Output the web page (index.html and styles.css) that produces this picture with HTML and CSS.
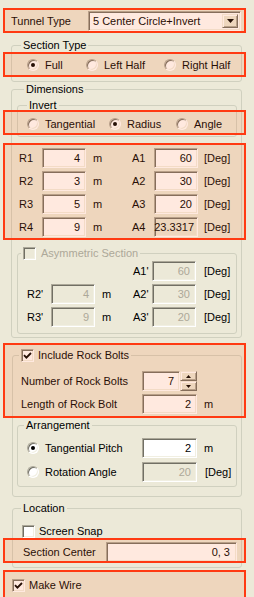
FILE: index.html
```html
<!DOCTYPE html>
<html>
<head>
<meta charset="utf-8">
<link rel="stylesheet" href="styles.css">
</head>
<body>
<div class="row top">
  <span class="top-label">Tunnel Type</span>
  <div class="combo sunken">
    <span class="combo-text">5 Center Circle+Invert</span>
    <span class="combo-btn raised"><svg width="7" height="4" viewBox="0 0 7 4"><path d="M0 0h7L3.5 4z" fill="#000"/></svg></span>
  </div>
</div>

<fieldset class="group g-section">
  <legend class="lg-section">Section Type</legend>
  <div class="row radios r-section">
    <span class="ritem w59"><span class="radio on"></span>Full</span>
    <span class="ritem w78"><span class="radio"></span>Left Half</span>
    <span class="ritem"><span class="radio"></span>Right Half</span>
  </div>
</fieldset>

<fieldset class="group g-dim">
  <legend class="lg-dim">Dimensions</legend>
  <div class="dim-inner">
    <fieldset class="group g-invert">
      <legend class="lg-invert">Invert</legend>
      <div class="row radios r-invert">
        <span class="ritem w82"><span class="radio"></span>Tangential</span>
        <span class="ritem w67"><span class="radio on"></span>Radius</span>
        <span class="ritem"><span class="radio"></span>Angle</span>
      </div>
    </fieldset>

    <div class="grid">
      <div class="row drow"><span class="c-rl">R1</span><span class="inp sunken">4</span><span class="c-unit">m</span><span class="c-al">A1</span><span class="inp sunken">60</span><span class="c-deg">[Deg]</span></div>
      <div class="row drow"><span class="c-rl">R2</span><span class="inp sunken">3</span><span class="c-unit">m</span><span class="c-al">A2</span><span class="inp sunken">30</span><span class="c-deg">[Deg]</span></div>
      <div class="row drow"><span class="c-rl">R3</span><span class="inp sunken">5</span><span class="c-unit">m</span><span class="c-al">A3</span><span class="inp sunken">20</span><span class="c-deg">[Deg]</span></div>
      <div class="row drow"><span class="c-rl">R4</span><span class="inp sunken">9</span><span class="c-unit">m</span><span class="c-al">A4</span><span class="inp sunken ro">23.3317</span><span class="c-deg">[Deg]</span></div>
    </div>

    <fieldset class="group g-asym">
      <legend class="lg-asym"><span class="lgflex"><span class="check dis"></span><span class="dis-text">Asymmetric Section</span></span></legend>
      <div class="agrid">
        <div class="row drow"><span class="c-rl2"></span><span class="blank"></span><span class="c-unit2"></span><span class="c-al2">A1'</span><span class="inp sunken dis">60</span><span class="c-deg2">[Deg]</span></div>
        <div class="row drow"><span class="c-rl2">R2'</span><span class="inp sunken dis">4</span><span class="c-unit2">m</span><span class="c-al2">A2'</span><span class="inp sunken dis">30</span><span class="c-deg2">[Deg]</span></div>
        <div class="row drow"><span class="c-rl2">R3'</span><span class="inp sunken dis">9</span><span class="c-unit2">m</span><span class="c-al2">A3'</span><span class="inp sunken dis">20</span><span class="c-deg2">[Deg]</span></div>
      </div>
    </fieldset>
  </div>
</fieldset>

<fieldset class="group g-rock">
  <legend class="lg-rock"><span class="lgflex"><span class="check"><svg width="9" height="9" viewBox="0 0 9 9"><path d="M1 4.2 L3.4 6.6 L8 2" fill="none" stroke="#000" stroke-width="1.9"/></svg></span><span>Include Rock Bolts</span></span></legend>
  <div class="rock-inner">
    <div class="row rrow r-num">
      <span class="c-rock">Number of Rock Bolts</span>
      <span class="inp sunken inp-num">7</span>
      <span class="spin">
        <span class="spin-btn raised"><svg width="5" height="3" viewBox="0 0 5 3"><path d="M0 3h5L2.5 0z" fill="#000"/></svg></span>
        <span class="spin-btn raised"><svg width="5" height="3" viewBox="0 0 5 3"><path d="M0 0h5L2.5 3z" fill="#000"/></svg></span>
      </span>
    </div>
    <div class="row rrow r-len">
      <span class="c-rock">Length of Rock Bolt</span>
      <span class="inp sunken inp-wide">2</span>
      <span class="c-unit3">m</span>
    </div>

    <fieldset class="group g-arr">
      <legend class="lg-arr">Arrangement</legend>
      <div class="row arow a1">
        <span class="ritem w115"><span class="radio on"></span>Tangential Pitch</span>
        <span class="inp sunken inp-wide white">2</span>
        <span class="c-unit3">m</span>
      </div>
      <div class="row arow a2">
        <span class="ritem w115"><span class="radio"></span>Rotation Angle</span>
        <span class="inp sunken inp-wide dis">20</span>
        <span class="c-unit4">[Deg]</span>
      </div>
    </fieldset>
  </div>
</fieldset>

<fieldset class="group g-loc">
  <legend class="lg-loc">Location</legend>
  <div class="loc-inner">
    <div class="row snap"><span class="check"></span><span class="cklabel">Screen Snap</span></div>
    <div class="row center-row">
      <span class="c-center">Section Center</span>
      <span class="inp sunken inp-center">0, 3</span>
    </div>
  </div>
</fieldset>

<div class="row wire">
  <span class="check"><svg width="9" height="9" viewBox="0 0 9 9"><path d="M1 4.2 L3.4 6.6 L8 2" fill="none" stroke="#000" stroke-width="1.9"/></svg></span><span class="cklabel">Make Wire</span>
</div>

<div class="hl hl1"></div>
<div class="hl hl2"></div>
<div class="hl hl3"></div>
<div class="hl hl4"></div>
<div class="hl hl5"></div>
<div class="hl hl6"></div>
<div class="hl hl7"></div>
</body>
</html>
```

FILE: styles.css
```css
* { box-sizing: border-box; }
html, body { margin: 0; padding: 0; }
body {
  width: 254px;
  height: 597px;
  overflow: hidden;
  position: relative;
  background: #ece9d8;
  color: #000;
  font-family: "Liberation Sans", Arial, sans-serif;
  font-size: 11px;
  line-height: 13px;
}

.row { display: flex; align-items: center; }

/* 3D edges */
.sunken {
  border: 1px solid;
  border-color: #aca899 #ffffff #ffffff #aca899;
  box-shadow: inset 1px 1px 0 #716f64, inset -1px -1px 0 #f1efe2;
  background: #fff;
}
.raised {
  border: 1px solid;
  border-color: #f1efe2 #716f64 #716f64 #f1efe2;
  box-shadow: inset 1px 1px 0 #fff, inset -1px -1px 0 #aca899;
  background: #ece9d8;
}

/* top combo */
.top { height: 20px; margin-top: 11px; padding-left: 11px; }
.top-label { width: 77px; }
.combo { width: 153px; height: 20px; display: flex; align-items: stretch; padding: 2px; }
.combo-text { flex: 1; padding-left: 2px; display: flex; align-items: center; }
.combo-btn { width: 16px; display: flex; align-items: center; justify-content: center; }

/* group boxes */
.group {
  margin: 0;
  padding: 0;
  border: 1px solid #d0d0bf;
  border-radius: 3px;
  min-width: 0;
}
.group > legend { padding: 0 2px; height: 13px; line-height: 13px; }
.lgflex { display: flex; align-items: center; height: 13px; }

.g-section { margin: 8px 0 0 11px; width: 231px; padding-bottom: 6px; }
.lg-section { margin-left: 9px; }
.g-dim { margin: 1px 0 0 11px; width: 231px; }
.lg-dim { margin-left: 12px; }
.dim-inner { padding: 0 4px 3px 5px; }
.g-invert { margin-top: 3px; width: 220px; padding-bottom: 2px; }
.lg-invert { margin-left: 9px; }

/* radios */
.radios { height: 20px; }
.r-section { margin-top: 3px; padding-left: 15px; }
.r-invert { margin-top: 2px; padding-left: 9px; }
.ritem { display: flex; align-items: center; }
.w59 { width: 59px; }
.w78 { width: 78px; }
.w82 { width: 82px; }
.w67 { width: 67px; }
.w115 { width: 115px; }
.radio {
  width: 12px;
  height: 12px;
  margin-right: 6px;
  border-radius: 50%;
  border: 1px solid;
  border-color: #aca899 #ffffff #ffffff #aca899;
  box-shadow: inset 1px 1px 0 #716f64, inset -1px -1px 0 #f1efe2;
  background: #fff;
  display: flex;
  align-items: center;
  justify-content: center;
  flex: none;
}
.radio.on::after {
  content: "";
  width: 4px;
  height: 4px;
  border-radius: 50%;
  background: #000;
}

/* checkboxes */
.check {
  width: 13px;
  height: 13px;
  flex: none;
  border: 1px solid;
  border-color: #aca899 #ffffff #ffffff #aca899;
  box-shadow: inset 1px 1px 0 #716f64, inset -1px -1px 0 #f1efe2;
  background: #fff;
  display: flex;
  align-items: center;
  justify-content: center;
}
.check.dis { background: #ece9d8; }
.cklabel { margin-left: 4px; }
.dis-text { margin-left: 5px; color: #aca899; }
.lg-rock .lgflex span:last-child { margin-left: 4px; }

/* inputs */
.inp {
  width: 44px;
  height: 20px;
  flex: none;
  display: flex;
  align-items: center;
  justify-content: flex-end;
  padding-right: 5px;
}
.inp.ro { background: #ece9d8; padding-right: 3px; }
.inp.dis { background: #ece9d8; color: #aca899; }
.blank { width: 44px; flex: none; }

/* dimensions grid */
.grid { margin-top: 11px; display: flex; flex-direction: column; gap: 3px; }
.drow { height: 20px; }
.c-rl { width: 25px; padding-left: 2px; }
.c-unit { width: 46px; padding-left: 7px; }
.c-al { width: 22px; }
.c-deg { padding-left: 6px; }

.g-asym { margin-top: 10px; width: 220px; padding-bottom: 6px; }
.lg-asym { margin-left: 3px; }
.agrid { margin-top: 1px; display: flex; flex-direction: column; gap: 3px; }
.c-rl2 { width: 33px; padding-left: 9px; }
.c-unit2 { width: 38px; padding-left: 7px; }
.c-al2 { width: 19px; }
.c-deg2 { padding-left: 8px; }

/* rock bolts */
.g-rock { margin: 11px 0 0 12px; width: 230px; }
.lg-rock { margin-left: 6px; }
.rock-inner { padding: 0 0 9px 0; }
.rrow { height: 20px; padding-left: 8px; }
.r-num { margin-top: 9px; }
.r-len { margin-top: 3px; }
.c-rock { width: 121px; }
.inp-num { width: 38px; }
.inp-wide { width: 55px; }
.inp.white { background: #fff; }
.spin { width: 17px; height: 20px; display: flex; flex-direction: column; }
.spin-btn { height: 10px; display: flex; align-items: center; justify-content: center; }
.c-unit3 { padding-left: 7px; }
.c-unit4 { padding-left: 8px; }

.g-arr { margin: 5px 4px 0 4px; width: 220px; padding-bottom: 4px; }
.lg-arr { margin-left: 6px; }
.arow { height: 20px; padding-left: 9px; }
.a1 { margin-top: 6px; }
.a2 { margin-top: 4px; }

/* location */
.g-loc { margin: 5px 0 0 12px; width: 230px; }
.lg-loc { margin-left: 8px; }
.loc-inner { padding-bottom: 5px; }
.snap { height: 14px; margin-top: 9px; padding-left: 9px; }
.center-row { height: 20px; margin-top: 4px; padding-left: 10px; }
.c-center { width: 83px; }
.inp-center { width: 131px; padding-right: 6px; }

.wire { height: 13px; margin-top: 11px; padding-left: 12px; }

/* highlight overlays */
.hl {
  position: absolute;
  left: 3px;
  width: 243px;
  border: 2px solid #ff3a12;
  background: rgba(255, 110, 40, 0.15);
  pointer-events: none;
}
.hl1 { top: 8px; height: 25px; }
.hl2 { top: 52px; height: 25px; }
.hl3 { top: 110px; height: 25px; }
.hl4 { top: 143px; height: 97px; }
.hl5 { top: 343px; height: 75px; }
.hl6 { top: 538px; height: 25px; }
.hl7 { top: 570px; height: 30px; }
```
